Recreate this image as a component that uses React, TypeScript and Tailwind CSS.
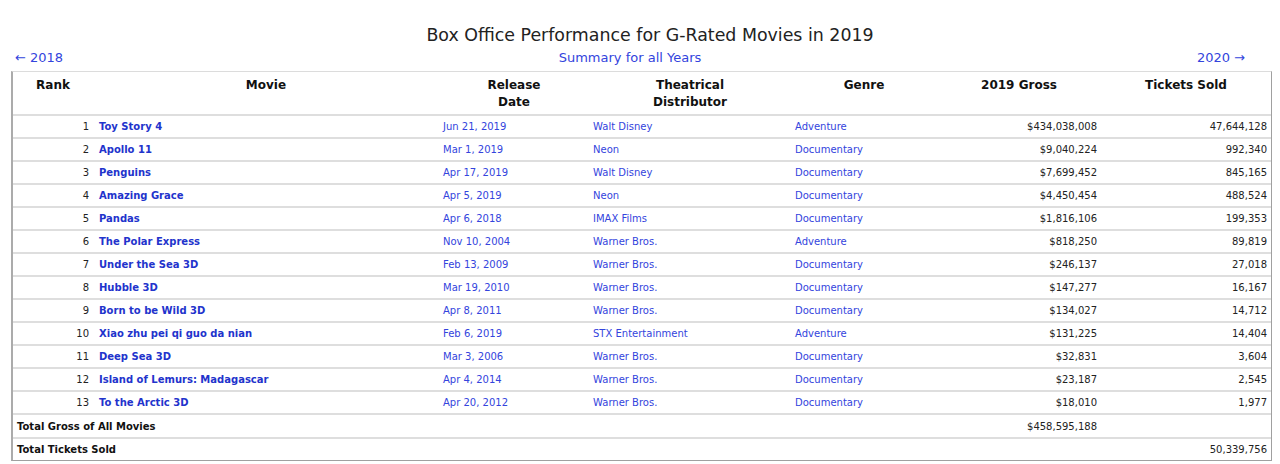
const movies = [
  { rank: 1, title: "Toy Story 4", date: "Jun 21, 2019", dist: "Walt Disney", genre: "Adventure", gross: "$434,038,008", tickets: "47,644,128" },
  { rank: 2, title: "Apollo 11", date: "Mar 1, 2019", dist: "Neon", genre: "Documentary", gross: "$9,040,224", tickets: "992,340" },
  { rank: 3, title: "Penguins", date: "Apr 17, 2019", dist: "Walt Disney", genre: "Documentary", gross: "$7,699,452", tickets: "845,165" },
  { rank: 4, title: "Amazing Grace", date: "Apr 5, 2019", dist: "Neon", genre: "Documentary", gross: "$4,450,454", tickets: "488,524" },
  { rank: 5, title: "Pandas", date: "Apr 6, 2018", dist: "IMAX Films", genre: "Documentary", gross: "$1,816,106", tickets: "199,353" },
  { rank: 6, title: "The Polar Express", date: "Nov 10, 2004", dist: "Warner Bros.", genre: "Adventure", gross: "$818,250", tickets: "89,819" },
  { rank: 7, title: "Under the Sea 3D", date: "Feb 13, 2009", dist: "Warner Bros.", genre: "Documentary", gross: "$246,137", tickets: "27,018" },
  { rank: 8, title: "Hubble 3D", date: "Mar 19, 2010", dist: "Warner Bros.", genre: "Documentary", gross: "$147,277", tickets: "16,167" },
  { rank: 9, title: "Born to be Wild 3D", date: "Apr 8, 2011", dist: "Warner Bros.", genre: "Documentary", gross: "$134,027", tickets: "14,712" },
  { rank: 10, title: "Xiao zhu pei qi guo da nian", date: "Feb 6, 2019", dist: "STX Entertainment", genre: "Adventure", gross: "$131,225", tickets: "14,404" },
  { rank: 11, title: "Deep Sea 3D", date: "Mar 3, 2006", dist: "Warner Bros.", genre: "Documentary", gross: "$32,831", tickets: "3,604" },
  { rank: 12, title: "Island of Lemurs: Madagascar", date: "Apr 4, 2014", dist: "Warner Bros.", genre: "Documentary", gross: "$23,187", tickets: "2,545" },
  { rank: 13, title: "To the Arctic 3D", date: "Apr 20, 2012", dist: "Warner Bros.", genre: "Documentary", gross: "$18,010", tickets: "1,977" },
];

const td = "border-t-2 border-[#dedede] py-[4px] px-[4px] leading-[13px] text-[10px] whitespace-nowrap";
const tdTotal = "border-t-2 border-[#dedede] pt-[5px] pb-[4px] px-[4px] leading-[13px] text-[10px] whitespace-nowrap";
const th = "px-[4px] pt-[5px] pb-[3px] align-top text-[12px] leading-[17px] font-bold text-[#111] text-center";

export default function App() {
  return (
    <div className="w-[1280px] h-[464px] bg-white text-[#222]" style={{ fontFamily: '"DejaVu Sans", Verdana, sans-serif' }}>
      <h1 className="pt-[24px] pl-[20px] text-center text-[17.4px] leading-[22px] font-normal text-[#222]">
        Box Office Performance for G-Rated Movies in 2019
      </h1>
      <div className="flex mt-[4px] text-[13px] leading-[16px] text-[#3344dd]">
        <div className="w-[400px] pl-[15px]"><a href="#">← 2018</a></div>
        <div className="flex-1 text-center"><a href="#">Summary for all Years</a></div>
        <div className="w-[420px] pr-[35px] text-right"><a href="#">2020 →</a></div>
      </div>

      <table className="ml-[11px] mt-[5px] w-[1261px] table-fixed border-separate border-spacing-0 border-l-2 border-l-[#ababab] border-t border-t-[#dcdcdc] border-r border-r-[#a0a0a0] border-b border-b-[#a0a0a0]">
        <colgroup>
          <col className="w-[80px]" />
          <col className="w-[346px]" />
          <col className="w-[150px]" />
          <col className="w-[202px]" />
          <col className="w-[146px]" />
          <col className="w-[164px]" />
          <col />
        </colgroup>
        <thead>
          <tr>
            <th className={th}>Rank</th>
            <th className={th}>Movie</th>
            <th className={th}>Release<br />Date</th>
            <th className={th}>Theatrical<br />Distributor</th>
            <th className={th}>Genre</th>
            <th className={th}>2019 Gross</th>
            <th className={th}>Tickets Sold</th>
          </tr>
        </thead>
        <tbody>
          {movies.map((m) => (
            <tr key={m.rank}>
              <td className={`${td} text-right text-[#222]`}>{m.rank}</td>
              <td className={`${td} pl-[6px] font-bold text-[#2233cc]`}><a href="#">{m.title}</a></td>
              <td className={`${td} text-[#3344dd]`}><a href="#">{m.date}</a></td>
              <td className={`${td} text-[#3344dd]`}><a href="#">{m.dist}</a></td>
              <td className={`${td} text-[#3344dd]`}><a href="#">{m.genre}</a></td>
              <td className={`${td} text-right text-[#222]`}>{m.gross}</td>
              <td className={`${td} text-right text-[#222]`}>{m.tickets}</td>
            </tr>
          ))}
          <tr>
            <td colSpan={5} className={`${tdTotal} font-bold text-[#111]`}>Total Gross of All Movies</td>
            <td className={`${tdTotal} text-right`}>$458,595,188</td>
            <td className={tdTotal}></td>
          </tr>
          <tr>
            <td colSpan={5} className={`${td} font-bold text-[#111]`}>Total Tickets Sold</td>
            <td className={td}></td>
            <td className={`${td} text-right`}>50,339,756</td>
          </tr>
        </tbody>
      </table>
    </div>
  );
}
